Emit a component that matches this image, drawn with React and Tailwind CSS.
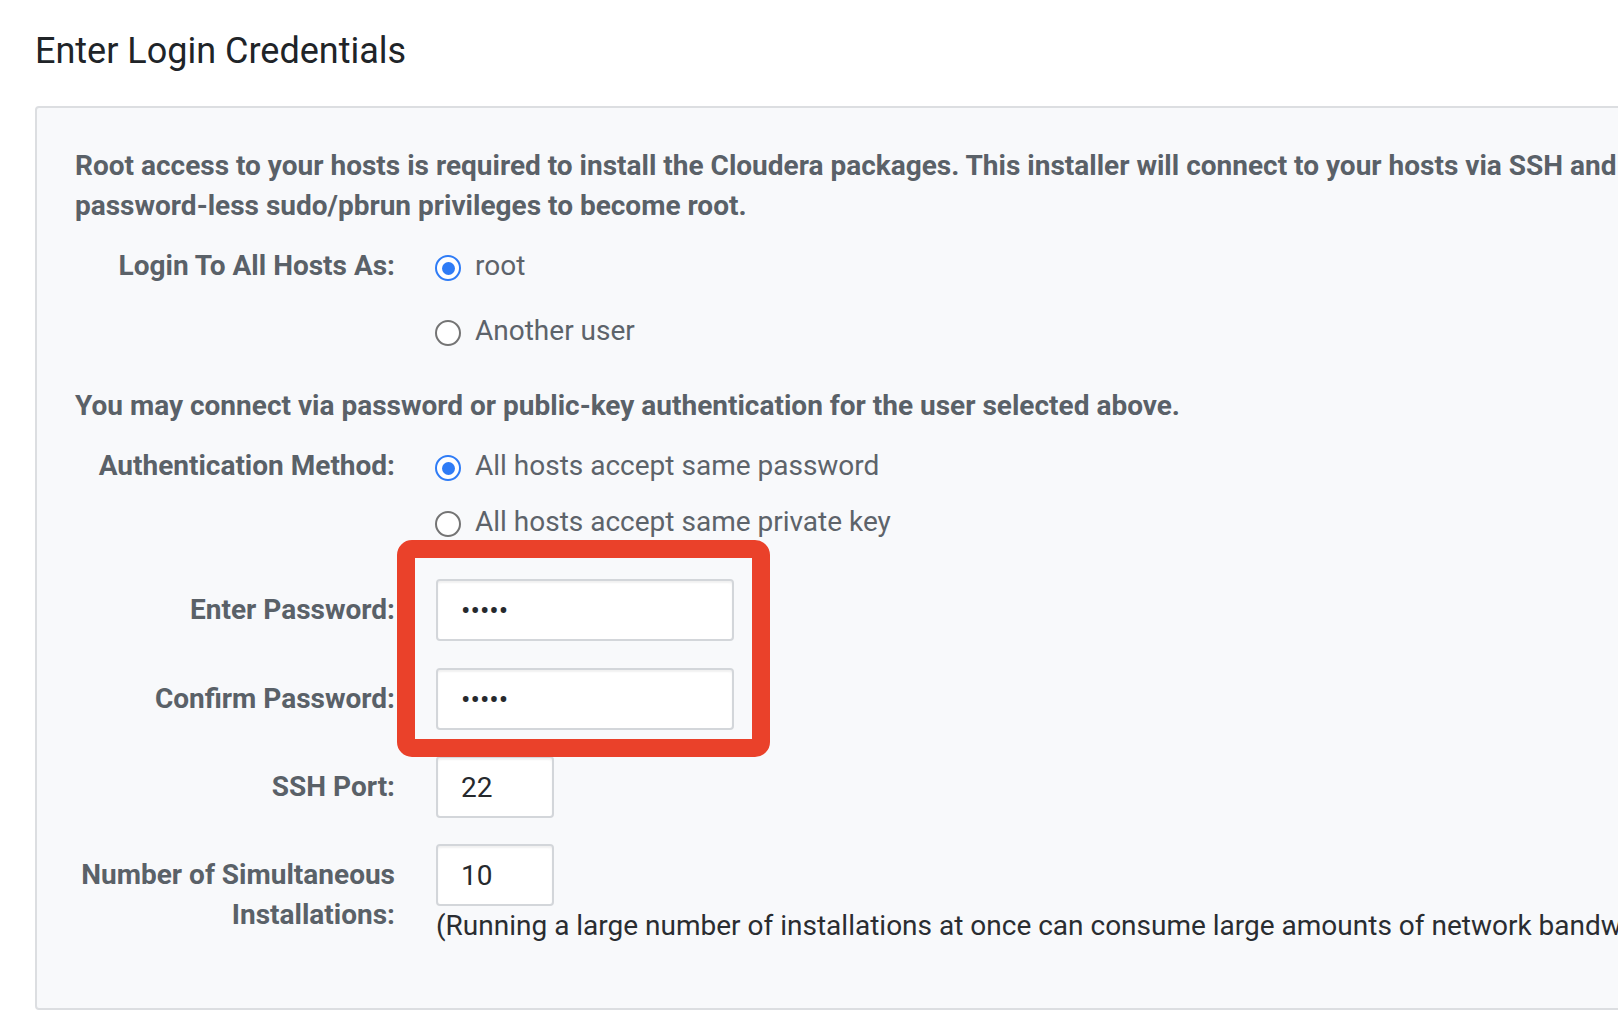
import React from "react";

function Radio({ checked }) {
  if (checked) {
    return (
      <span className="mt-[9px] flex h-[26px] w-[26px] shrink-0 items-center justify-center rounded-full border-[2.5px] border-[#2f7cf6] bg-white">
        <span className="h-[13px] w-[13px] rounded-full bg-[#2f7cf6]" />
      </span>
    );
  }
  return <span className="mt-[9px] h-[26px] w-[26px] shrink-0 rounded-full border-2 border-[#747474] bg-white" />;
}

function RadioItem({ checked, label }) {
  return (
    <label className="flex h-[40px] items-start gap-[14px]">
      <Radio checked={checked} />
      <span className="text-[28px] leading-[40px] text-[#5d636a]">{label}</span>
    </label>
  );
}

function Label({ children, className = "" }) {
  return (
    <div className={"text-right text-[28px] font-bold leading-[40px] text-[#5a6168] " + className}>{children}</div>
  );
}

const inputCls =
  "h-[62px] rounded-[4px] border-2 border-[#d3d6da] bg-white pl-[23px] text-[28px] text-[#26292d] shadow-[inset_0_2px_2px_rgba(0,0,0,0.06)] outline-none font-['Roboto',sans-serif]";

export default function App() {
  return (
    <div className="h-[1036px] w-[1618px] overflow-hidden bg-white font-['Roboto',sans-serif]">
      <div className="pl-[35px] pt-[31px]">
        <h3 className="text-[36px] font-normal leading-[40px] text-[#202428]">Enter Login Credentials</h3>

        <div className="relative mt-[35px] w-[1760px] rounded-[4px] border-2 border-[#dcdee1] bg-[#f8f9fb] pb-[62px] pl-[38px] pt-[38px]">
          <p className="text-[28px] font-bold leading-[40px] text-[#5a6168]">
            Root access to your hosts is required to install the Cloudera packages. This installer will connect to your hosts via SSH and
            <br />
            password-less sudo/pbrun privileges to become root.
          </p>

          <div className="mt-[20px] grid grid-cols-[320px_1fr] gap-x-[40px]">
            <Label>Login To All Hosts As:</Label>
            <div className="flex flex-col gap-[25px]">
              <RadioItem checked label="root" />
              <RadioItem label="Another user" />
            </div>
          </div>

          <p className="mt-[35px] text-[28px] font-bold leading-[40px] text-[#5a6168]">
            You may connect via password or public-key authentication for the user selected above.
          </p>

          <div className="mt-[20px] grid grid-cols-[320px_1fr] gap-x-[40px]">
            <Label>Authentication Method:</Label>
            <div className="flex flex-col gap-[16px]">
              <RadioItem checked label="All hosts accept same password" />
              <RadioItem label="All hosts accept same private key" />
            </div>
          </div>

          <div className="mt-[37px] grid grid-cols-[320px_1fr] items-start gap-x-[41px]">
            <Label className="pt-[11px]">Enter Password:</Label>
            <input type="password" readOnly defaultValue="abcde" className={inputCls + " w-[298px]"} />
          </div>

          <div className="mt-[27px] grid grid-cols-[320px_1fr] items-start gap-x-[41px]">
            <Label className="pt-[11px]">Confirm Password:</Label>
            <input type="password" readOnly defaultValue="abcde" className={inputCls + " w-[298px]"} />
          </div>

          <div className="mt-[26px] grid grid-cols-[320px_1fr] items-start gap-x-[41px]">
            <Label className="pt-[11px]">SSH Port:</Label>
            <input type="text" readOnly defaultValue="22" className={inputCls + " w-[118px]"} />
          </div>

          <div className="mt-[26px] grid grid-cols-[320px_1fr] items-start gap-x-[41px]">
            <Label className="pt-[11px]">Number of Simultaneous Installations:</Label>
            <div className="flex flex-col">
              <input type="text" readOnly defaultValue="10" className={inputCls + " w-[118px]"} />
              <span className="whitespace-nowrap text-[28px] leading-[40px] text-[#2a2d31]">
                (Running a large number of installations at once can consume large amounts of network bandwidth and other system resources.)
              </span>
            </div>
          </div>

          <div className="pointer-events-none absolute left-[360px] top-[432px] h-[217px] w-[373px] rounded-[15px] border-[18px] border-[#ea412a]" />
        </div>
      </div>
    </div>
  );
}
